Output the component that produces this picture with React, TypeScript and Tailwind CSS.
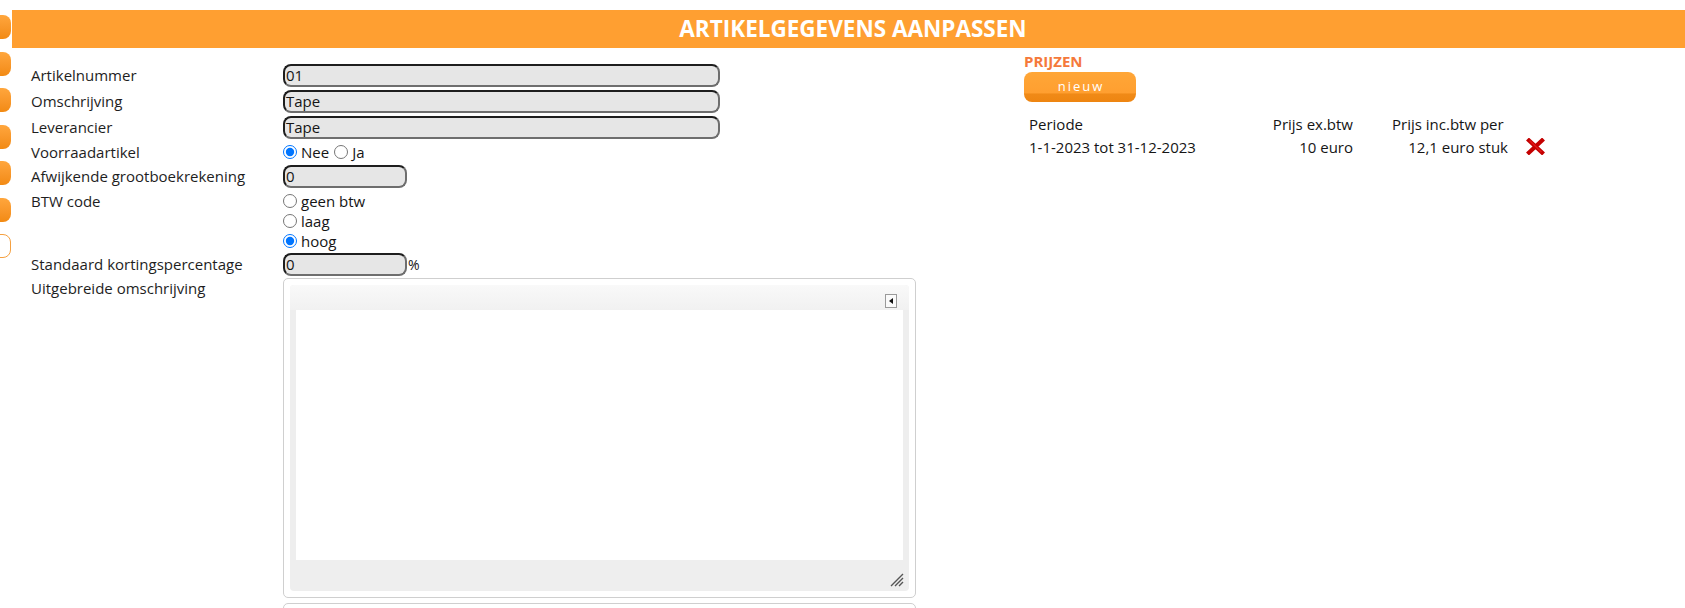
import React from "react";

const font = "font-['Open_Sans',sans-serif]";

const TextField = ({ value, wide }: { value: string; wide?: boolean }) => (
  <div
    className={`${
      wide ? "w-[437px]" : "w-[124px]"
    } h-[23px] rounded-[8px] border-2 border-t-[#1e1e1e] border-l-[#1e1e1e] border-r-[#6e6e6e] border-b-[#6e6e6e] bg-[#e6e6e6] pl-[1px] flex items-center text-[15px] text-[#151515]`}
  >
    {value}
  </div>
);

const Radio = ({ checked, label }: { checked?: boolean; label: string }) => (
  <label className="flex items-center mr-[5px] text-[15px] text-[#151515]">
    <input
      type="radio"
      defaultChecked={checked}
      className="m-0 w-[14px] h-[14px]"
      name={label}
    />
    <span className="ml-[4px]">{label}</span>
  </label>
);

const Row = ({
  label,
  h = "h-[26px]",
  children,
}: {
  label: string;
  h?: string;
  children: React.ReactNode;
}) => (
  <div className={`flex items-center ${h}`}>
    <div className="w-[252px] pt-[1px] text-[15px] text-[#1e1e1e]">{label}</div>
    {children}
  </div>
);

// kleine rode kruisje om prijsregel te verwijderen
const DeleteIcon = () => (
  <svg width="19" height="17" viewBox="0 0 19 17">
    <path d="M3 2.5 L16 14.5 M16 2.5 L3 14.5" stroke="#c40000" strokeWidth="4.2" strokeLinecap="square" />
    <path d="M3.5 2.5 L15.5 14" stroke="#e21818" strokeWidth="1.4" />
  </svg>
);

export default function App() {
  return (
    <div className={`${font} flex w-full min-h-[608px] bg-white`}>
      {/* tabjes links */}
      <div className="w-[12px] shrink-0 overflow-hidden flex flex-col pt-[15px] gap-[12.5px]">
        {[0, 1, 2, 3, 4, 5].map((i) => (
          <div
            key={i}
            className="h-[24px] w-[30px] -ml-[19px] shrink-0 rounded-[8px] bg-linear-to-b from-[#ffa63c] to-[#f28a12]"
          />
        ))}
        <div className="h-[24px] w-[30px] -ml-[19px] shrink-0 rounded-[8px] bg-white border border-[#f5a040]" />
      </div>

      <div className="flex-1 flex flex-col pt-[10px]">
        <div className="h-[38px] bg-[#ff9f31] flex items-center justify-center pl-[9px] text-white font-bold text-[22.5px] leading-none">
          ARTIKELGEGEVENS AANPASSEN
        </div>

        <div className="flex pl-[19px]">
          {/* formulier */}
          <div className="w-[993px] shrink-0 pt-[14px]">
            <Row label="Artikelnummer">
              <TextField value="01" wide />
            </Row>
            <Row label="Omschrijving">
              <TextField value="Tape" wide />
            </Row>
            <Row label="Leverancier">
              <TextField value="Tape" wide />
            </Row>
            <Row label="Voorraadartikel" h="h-[24px]">
              <Radio checked label="Nee" />
              <Radio label="Ja" />
            </Row>
            <Row label="Afwijkende grootboekrekening" h="h-[24px]">
              <TextField value="0" />
            </Row>
            <div className="flex pt-[3px]">
              <div className="w-[252px] h-[20px] leading-[20px] text-[15px] text-[#1e1e1e]">BTW code</div>
              <div className="flex flex-col">
                <div className="h-[20px] flex items-center">
                  <Radio label="geen btw" />
                </div>
                <div className="h-[20px] flex items-center">
                  <Radio label="laag" />
                </div>
                <div className="h-[20px] flex items-center">
                  <Radio checked label="hoog" />
                </div>
              </div>
            </div>
            <Row label="Standaard kortingspercentage">
              <TextField value="0" />
              <span className="text-[14px] text-[#151515] ml-[1px]">%</span>
            </Row>
            <div className="flex">
              <div className="w-[252px] pt-[1px] leading-[20px] text-[15px] text-[#1e1e1e]">
                Uitgebreide omschrijving
              </div>
              <div className="mt-[1px] w-[633px] h-[320px] border border-[#cfcfcf] rounded-[5px] p-[6px]">
                <div className="h-full rounded-[4px] bg-[#eeeeee] flex flex-col">
                  <div className="h-[25px] rounded-t-[4px] bg-linear-to-b from-[#f9f9f9] to-[#f1f1f1] flex justify-end items-start pt-[9px] pr-[12px]">
                    <div className="w-[12px] h-[14px] border border-[#9a9a9a] bg-[#fafafa] flex items-center justify-center">
                      <svg width="4" height="6" viewBox="0 0 4 6">
                        <path d="M4 0 L0 3 L4 6 Z" fill="#111" />
                      </svg>
                    </div>
                  </div>
                  <div className="mx-[6px] h-[250px] bg-white" />
                  <div className="flex-1 flex justify-end items-end pr-[5px] pb-[4px]">
                    <svg width="14" height="14" viewBox="0 0 14 14">
                      <path d="M1 13 L13 1 M5 13 L13 5 M9 13 L13 9" stroke="#555" strokeWidth="1.4" />
                    </svg>
                  </div>
                </div>
              </div>
            </div>
            <div className="flex mt-[5px]">
              <div className="w-[252px] pt-[1px] leading-[20px] text-[15px] text-[#1e1e1e]">
                Notitie op factuur
              </div>
              <div className="w-[633px] h-[100px] border border-[#cfcfcf] rounded-[5px]" />
            </div>
          </div>

          {/* prijzen */}
          <div className="flex-1 pt-[4px]">
            <div className="text-[15px] leading-[18px] font-bold text-[#f5793b]">PRIJZEN</div>
            <button className="mt-[2px] w-[112px] h-[30px] rounded-[8px] bg-[linear-gradient(to_bottom,#ffa637_0%,#ff9f30_70%,#f08a17_73%,#ee8511_100%)] text-white text-[13px] tracking-[2px] flex items-center justify-center pl-[2px]">
              nieuw
            </button>
            <table className="mt-[11px] text-[15px] text-[#151515] border-collapse">
              <tbody>
                <tr className="h-[22px]">
                  <td className="w-[243px] pl-[5px]">Periode</td>
                  <td className="w-[90px] text-right pr-[4px]">Prijs ex.btw</td>
                  <td className="w-[155px] pl-[35px] whitespace-nowrap">Prijs inc.btw per</td>
                  <td />
                </tr>
                <tr className="h-[22px]">
                  <td className="pl-[5px] whitespace-nowrap">1-1-2023 tot 31-12-2023</td>
                  <td className="text-right pr-[4px] whitespace-nowrap">10 euro</td>
                  <td className="text-right pr-[4px] whitespace-nowrap">12,1 euro stuk</td>
                  <td className="pl-[14px]">
                    <DeleteIcon />
                  </td>
                </tr>
              </tbody>
            </table>
          </div>
        </div>
      </div>
    </div>
  );
}
